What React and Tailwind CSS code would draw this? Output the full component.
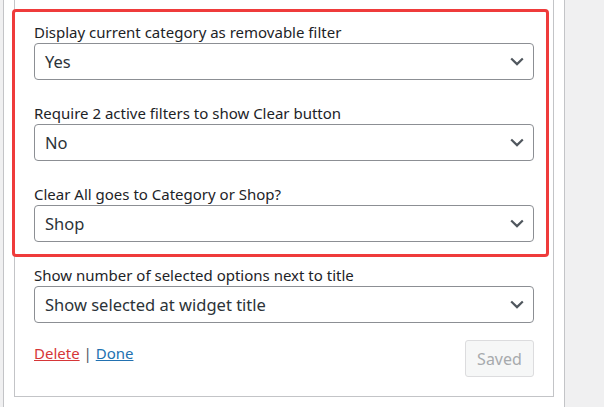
import React from 'react';

const groups = [
  { label: 'Display current category as removable filter', value: 'Yes' },
  { label: 'Require 2 active filters to show Clear button', value: 'No' },
  { label: 'Clear All goes to Category or Shop?', value: 'Shop' },
  { label: 'Show number of selected options next to title', value: 'Show selected at widget title' },
];

const Chevron = () => (
  <svg width="14" height="9" viewBox="0 0 14 9" className="shrink-0">
    <path d="M1.2 1.5l5.8 5.6 5.8-5.6" fill="none" stroke="#50575e" strokeWidth="2.2" />
  </svg>
);

const SelectBox = ({ value }) => (
  <div className="flex h-[37px] w-[500px] items-center justify-between rounded-[4px] border border-[#8c8f94] bg-white pl-[10px] pr-[9px] text-[16.5px] text-[#2c3338]">
    <span className="pt-[2px]">{value}</span>
    <Chevron />
  </div>
);

export default function App() {
  return (
    <div className="relative flex h-[407px] w-[604px] overflow-hidden bg-[#f0f0f1] font-['Noto_Sans',sans-serif]">
      {/* white sidebar panel */}
      <div className="ml-[3px] h-full w-[562px] border-x border-[#c3c4c7] bg-white pl-[10px]">
        <div className="h-[397px] w-[540px] border-x border-b border-[#c3c4c7] px-[19px] pt-[22px]">
          {groups.map((g, i) => (
            <div key={i} className={i < groups.length - 1 ? 'mb-[23px]' : ''}>
              <div className="text-[15px] leading-[21px] text-[#1d2327]">{g.label}</div>
              <SelectBox value={g.value} />
            </div>
          ))}

          <div className="mt-[17px] flex items-start justify-between">
            <div className="mt-[3px] text-[15px] leading-[21px] text-[#50575e]">
              <a className="text-[#d63638] underline">Delete</a>
              {' | '}
              <a className="text-[#2271b1] underline">Done</a>
            </div>
            <button className="h-[37px] w-[69px] rounded-[3px] border border-[#dcdcde] bg-[#f6f7f7] text-[16px] text-[#a7aaad]">
              Saved
            </button>
          </div>
        </div>
      </div>

      {/* annotation highlight */}
      <div className="pointer-events-none absolute left-[12px] top-[9px] h-[248px] w-[537px] rounded-[4px] border-[3px] border-[#ef3b3b]" />
    </div>
  );
}
